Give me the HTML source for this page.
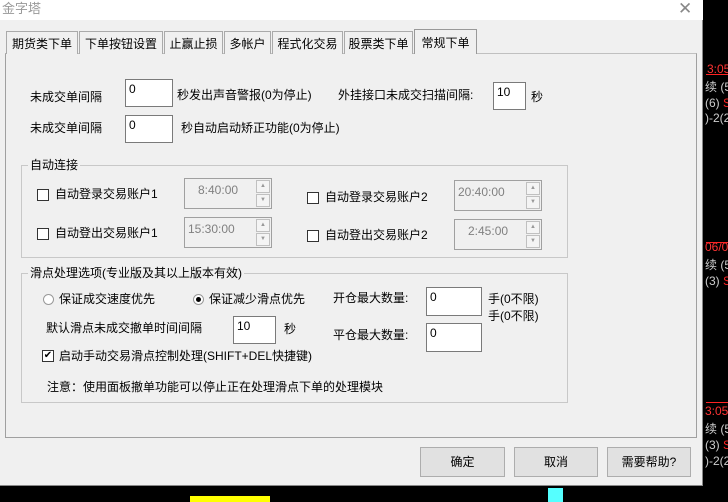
<!DOCTYPE html><html><head><meta charset="utf-8"><style>
*{margin:0;padding:0;box-sizing:border-box}
body{width:728px;height:502px;background:#000;position:relative;overflow:hidden;font-family:"Liberation Sans","Noto Sans CJK SC",sans-serif;font-size:12px;color:#000}
.a{position:absolute;white-space:nowrap;font-size:12px;line-height:14px}
#dlg{position:absolute;left:0;top:0;width:703px;height:486px;background:#f0f0f0;border-right:1px solid #888;border-bottom:1px solid #888}
#title{position:absolute;left:0;top:0;width:703px;height:20px;background:#fff}
.tab{position:absolute;top:31px;height:23px;border:1px solid #aaa;border-bottom:none;background:#f0f0f0;font-size:12px;line-height:14px;padding-top:5px;text-align:center;white-space:nowrap}
.inp{position:absolute;background:#fff;border:1px solid #7a7a7a;font-size:12px;line-height:14px;padding:2px 3px}
.grp{position:absolute;border:1px solid #c8c8c8}
.cb{position:absolute;width:12px;height:12px;border:1px solid #333;background:#fff}
.spin{position:absolute;border:1px solid #a0a0a0;background:#f0f0f0;color:#808080;font-size:12px;line-height:14px;padding:4px 3px;white-space:nowrap}
.spb{position:absolute;right:1px;width:14px;height:13px;border:1px solid #c0c0c0;background:#f4f4f4;font-size:6px;color:#999;text-align:center;line-height:11px}
.btn{position:absolute;top:447px;height:30px;border:1px solid #adadad;background:#e1e1e1;font-size:12px;text-align:center;line-height:28px}
.rd{position:absolute;width:11px;height:11px;border:1px solid #999;border-radius:50%;background:#fff}
</style></head><body>
<div class="a" style="left:707px;top:62px;color:#f33">3:05</div>
<div class="a" style="left:705px;top:80px;color:#ccc">续 (5</div>
<div class="a" style="left:705px;top:96px;color:#ccc">(6) <span style="color:#f22">S</span></div>
<div class="a" style="left:705px;top:111px;color:#ccc">)-2(2</div>
<div class="a" style="left:705px;top:240px;color:#f33">06/01</div>
<div class="a" style="left:705px;top:258px;color:#ccc">续 (5</div>
<div class="a" style="left:705px;top:274px;color:#ccc">(3) <span style="color:#f22">S</span></div>
<div class="a" style="left:705px;top:404px;color:#f33">3:05</div>
<div class="a" style="left:705px;top:422px;color:#ccc">续 (5</div>
<div class="a" style="left:705px;top:438px;color:#ccc">(3) <span style="color:#f22">S</span></div>
<div class="a" style="left:705px;top:454px;color:#ccc">)-2(2</div>
<div class="a" style="left:706px;top:74px;width:22px;height:1px;background:#f22"></div>
<div class="a" style="left:706px;top:242px;width:22px;height:1px;background:#f22"></div>
<div class="a" style="left:706px;top:402px;width:22px;height:1px;background:#f22"></div>
<div class="a" style="left:548px;top:488px;width:15px;height:14px;background:#5ff"></div>
<div class="a" style="left:190px;top:496px;width:80px;height:6px;background:#ff0"></div>

<div id="dlg">
<div id="title"><div class="a" style="left:2px;top:2px;font-size:13px;color:#999">金字塔</div><div class="a" style="left:678px;top:0px;font-size:17px;line-height:18px;color:#888">✕</div></div>
<div style="position:absolute;left:5px;top:53px;width:692px;height:385px;border:1px solid #a0a0a0;border-top-color:#c0c0c0"></div>
<div class="tab" style="left:6px;width:72px">期货类下单</div>
<div class="tab" style="left:79px;width:84px">下单按钮设置</div>
<div class="tab" style="left:164px;width:59px">止赢止损</div>
<div class="tab" style="left:224px;width:47px">多帐户</div>
<div class="tab" style="left:272px;width:71px">程式化交易</div>
<div class="tab" style="left:344px;width:69px">股票类下单</div>
<div class="tab" style="left:414px;top:29px;height:25px;width:63px;border-color:#999;padding-top:6px">常规下单</div>

<div class="a" style="left:30px;top:90px">未成交单间隔</div>
<div class="inp" style="left:125px;top:79px;width:48px;height:28px">0</div>
<div class="a" style="left:177px;top:88px">秒发出声音警报(0为停止)</div>
<div class="a" style="left:338px;top:88px">外挂接口未成交扫描间隔:</div>
<div class="inp" style="left:493px;top:82px;width:33px;height:28px">10</div>
<div class="a" style="left:531px;top:90px">秒</div>
<div class="a" style="left:30px;top:121px">未成交单间隔</div>
<div class="inp" style="left:125px;top:115px;width:48px;height:28px">0</div>
<div class="a" style="left:181px;top:121px">秒自动启动矫正功能(0为停止)</div>

<div class="grp" style="left:21px;top:165px;width:547px;height:93px"></div>
<div class="a" style="left:28px;top:158px;background:#f0f0f0;padding:0 2px">自动连接</div>
<div class="cb" style="left:37px;top:189px"></div><div class="a" style="left:55px;top:187px">自动登录交易账户1</div>
<div class="cb" style="left:37px;top:228px"></div><div class="a" style="left:55px;top:226px">自动登出交易账户1</div>
<div class="cb" style="left:307px;top:192px"></div><div class="a" style="left:325px;top:190px">自动登录交易账户2</div>
<div class="cb" style="left:307px;top:230px"></div><div class="a" style="left:325px;top:228px">自动登出交易账户2</div>
<div class="spin" style="left:184px;top:178px;width:88px;height:31px">&nbsp;&nbsp;&nbsp;8:40:00<div class="spb" style="top:1px">▲</div><div class="spb" style="top:15px">▼</div></div>
<div class="spin" style="left:184px;top:217px;width:88px;height:31px">15:30:00<div class="spb" style="top:1px">▲</div><div class="spb" style="top:15px">▼</div></div>
<div class="spin" style="left:454px;top:180px;width:88px;height:31px">20:40:00<div class="spb" style="top:1px">▲</div><div class="spb" style="top:15px">▼</div></div>
<div class="spin" style="left:454px;top:219px;width:88px;height:31px">&nbsp;&nbsp;&nbsp;2:45:00<div class="spb" style="top:1px">▲</div><div class="spb" style="top:15px">▼</div></div>

<div class="grp" style="left:21px;top:273px;width:547px;height:130px"></div>
<div class="a" style="left:28px;top:266px;background:#f0f0f0;padding:0 2px">滑点处理选项(专业版及其以上版本有效)</div>
<div class="rd" style="left:43px;top:294px"></div><div class="a" style="left:59px;top:292px">保证成交速度优先</div>
<div class="rd" style="left:193px;top:294px"></div><div class="a" style="left:196px;top:297px;width:5px;height:5px;border-radius:50%;background:#000"></div><div class="a" style="left:209px;top:292px">保证减少滑点优先</div>
<div class="a" style="left:46px;top:321px">默认滑点未成交撤单时间间隔</div>
<div class="inp" style="left:233px;top:316px;width:43px;height:28px">10</div>
<div class="a" style="left:284px;top:322px">秒</div>
<div class="a" style="left:333px;top:291px">开仓最大数量:</div>
<div class="a" style="left:333px;top:328px">平仓最大数量:</div>
<div class="inp" style="left:426px;top:287px;width:56px;height:29px">0</div>
<div class="inp" style="left:426px;top:323px;width:56px;height:29px">0</div>
<div class="a" style="left:488px;top:292px">手(0不限)</div>
<div class="a" style="left:488px;top:309px">手(0不限)</div>
<div class="cb" style="left:42px;top:350px;font-size:10px;line-height:9px;text-align:center">✔</div>
<div class="a" style="left:59px;top:349px">启动手动交易滑点控制处理(SHIFT+DEL快捷键)</div>
<div class="a" style="left:47px;top:380px">注意：使用面板撤单功能可以停止正在处理滑点下单的处理模块</div>

<div class="btn" style="left:420px;width:85px">确定</div>
<div class="btn" style="left:514px;width:84px">取消</div>
<div class="btn" style="left:607px;width:84px">需要帮助?</div>
</div>
</body></html>
